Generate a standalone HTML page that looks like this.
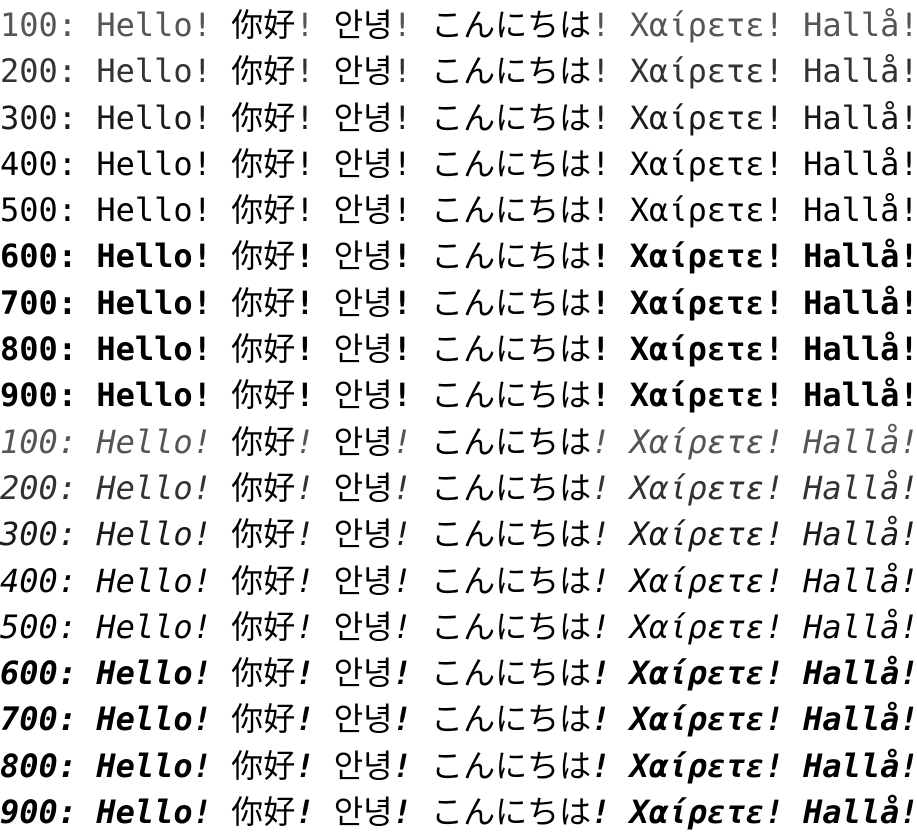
<!DOCTYPE html>
<html><head><meta charset="utf-8">
<style>
html,body{margin:0;padding:0;background:#fff;}
body{width:917px;height:834px;overflow:hidden;}
.l{font-family:"DejaVu Sans Mono","Liberation Mono","Noto Sans CJK JP",monospace;font-size:32px;line-height:46.3px;height:46.3px;white-space:pre;color:#000;letter-spacing:0;}
.c{font-family:"Noto Sans CJK JP","Noto Sans CJK KR",sans-serif;font-weight:400;font-style:normal;color:#000;}
.w1{color:#555;}
.w2{color:#333;}
.w3{color:#1a1a1a;}
.b{font-weight:bold;}
.i{font-style:italic;}
</style></head><body>
<div class="l w1">100: Hello! <span class="c">你好</span>! <span class="c">안녕</span>! <span class="c">こんにちは</span>! Χαίρετε! Hallå!</div>
<div class="l w2">200: Hello! <span class="c">你好</span>! <span class="c">안녕</span>! <span class="c">こんにちは</span>! Χαίρετε! Hallå!</div>
<div class="l w3">300: Hello! <span class="c">你好</span>! <span class="c">안녕</span>! <span class="c">こんにちは</span>! Χαίρετε! Hallå!</div>
<div class="l">400: Hello! <span class="c">你好</span>! <span class="c">안녕</span>! <span class="c">こんにちは</span>! Χαίρετε! Hallå!</div>
<div class="l">500: Hello! <span class="c">你好</span>! <span class="c">안녕</span>! <span class="c">こんにちは</span>! Χαίρετε! Hallå!</div>
<div class="l b">600: Hello! <span class="c">你好</span>! <span class="c">안녕</span>! <span class="c">こんにちは</span>! Χαίρετε! Hallå!</div>
<div class="l b">700: Hello! <span class="c">你好</span>! <span class="c">안녕</span>! <span class="c">こんにちは</span>! Χαίρετε! Hallå!</div>
<div class="l b">800: Hello! <span class="c">你好</span>! <span class="c">안녕</span>! <span class="c">こんにちは</span>! Χαίρετε! Hallå!</div>
<div class="l b">900: Hello! <span class="c">你好</span>! <span class="c">안녕</span>! <span class="c">こんにちは</span>! Χαίρετε! Hallå!</div>
<div class="l i w1">100: Hello! <span class="c">你好</span>! <span class="c">안녕</span>! <span class="c">こんにちは</span>! Χαίρετε! Hallå!</div>
<div class="l i w2">200: Hello! <span class="c">你好</span>! <span class="c">안녕</span>! <span class="c">こんにちは</span>! Χαίρετε! Hallå!</div>
<div class="l i w3">300: Hello! <span class="c">你好</span>! <span class="c">안녕</span>! <span class="c">こんにちは</span>! Χαίρετε! Hallå!</div>
<div class="l i">400: Hello! <span class="c">你好</span>! <span class="c">안녕</span>! <span class="c">こんにちは</span>! Χαίρετε! Hallå!</div>
<div class="l i">500: Hello! <span class="c">你好</span>! <span class="c">안녕</span>! <span class="c">こんにちは</span>! Χαίρετε! Hallå!</div>
<div class="l i b">600: Hello! <span class="c">你好</span>! <span class="c">안녕</span>! <span class="c">こんにちは</span>! Χαίρετε! Hallå!</div>
<div class="l i b">700: Hello! <span class="c">你好</span>! <span class="c">안녕</span>! <span class="c">こんにちは</span>! Χαίρετε! Hallå!</div>
<div class="l i b">800: Hello! <span class="c">你好</span>! <span class="c">안녕</span>! <span class="c">こんにちは</span>! Χαίρετε! Hallå!</div>
<div class="l i b">900: Hello! <span class="c">你好</span>! <span class="c">안녕</span>! <span class="c">こんにちは</span>! Χαίρετε! Hallå!</div>
</body></html>
